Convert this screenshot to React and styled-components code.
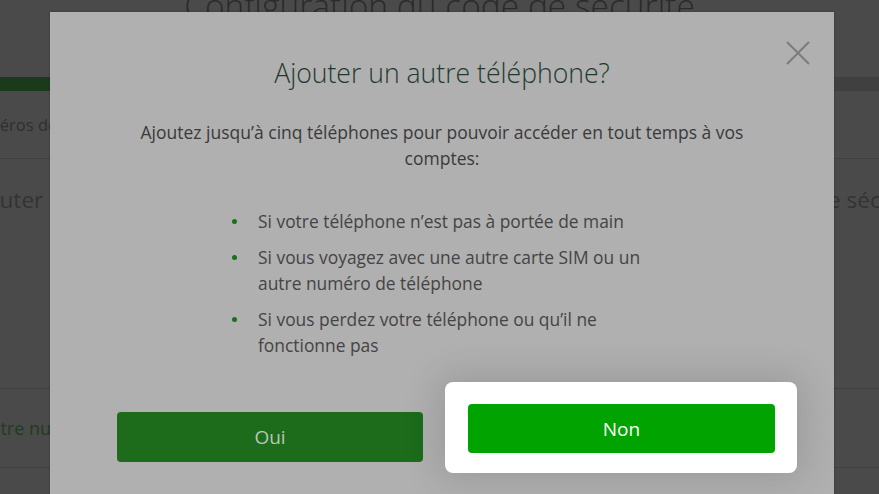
import React from 'react';
import styled, { createGlobalStyle } from 'styled-components';

const Global = createGlobalStyle`
  html, body { margin: 0; padding: 0; }
  body {
    background: #4a4a4a;
    font-family: "Open Sans", "Noto Sans", sans-serif;
    overflow: hidden;
  }
`;

const Screen = styled.div`
  position: relative;
  width: 879px;
  height: 494px;
  overflow: hidden;
  background: #4a4a4a;
`;

const Backdrop = styled.div`
  display: flex;
  flex-direction: column;
  width: 955px;
  margin-left: -38px;
`;

const PageTitle = styled.h1`
  margin: -15px 0 0;
  font-size: 33.5px;
  line-height: 40px;
  font-weight: 300;
  color: #2b2b2b;
  text-align: center;
  white-space: nowrap;
`;

const Progress = styled.div`
  margin-top: 52px;
  height: 14px;
  background: #404040;
  display: flex;
`;

const ProgressFill = styled.div`
  background: #1b3a1b;
  height: 100%;
`;

const Row = styled.div`
  display: flex;
  align-items: ${p => (p.$top ? 'flex-start' : 'center')};
  height: ${p => p.$h}px;
  padding-left: ${p => p.$indent || 0}px;
  padding-top: ${p => p.$pt || 0}px;
  box-sizing: border-box;
  border-bottom: 1px solid #3f3f3f;
  white-space: nowrap;
`;

const RowText = styled.span`
  font-size: ${p => p.$size}px;
  color: ${p => p.$color};
`;

const Modal = styled.div`
  position: absolute;
  left: 50px;
  top: 12px;
  width: 784px;
  height: 520px;
  box-sizing: border-box;
  background: #b0b0b0;
  padding: 44px 67px 0;
  display: flex;
  flex-direction: column;
  align-items: center;
  box-shadow: 0 0 2px rgba(0, 0, 0, 0.25);
`;

const Close = styled.button`
  position: absolute;
  top: 28px;
  right: 23px;
  width: 26px;
  height: 26px;
  padding: 0;
  border: 0;
  background: transparent;
  display: flex;
  align-items: center;
  justify-content: center;
`;

const Title = styled.h2`
  margin: 0;
  font-size: 26.6px;
  line-height: 34px;
  font-weight: 300;
  color: #1f3a2c;
  text-align: center;
`;

const Lead = styled.p`
  margin: 29px 0 0;
  max-width: 640px;
  font-size: 17.5px;
  line-height: 26px;
  color: #3a3a3a;
  text-align: center;
`;

const List = styled.ul`
  align-self: flex-start;
  margin: 37px 0 0 141px;
  padding: 0;
  list-style: none;
  width: 405px;
  display: flex;
  flex-direction: column;
  gap: 10px;
`;

const Item = styled.li`
  position: relative;
  font-size: 17.4px;
  line-height: 26px;
  color: #444;
  &::before {
    content: "";
    position: absolute;
    left: -26px;
    top: 11px;
    width: 5px;
    height: 5px;
    border-radius: 50%;
    background: #1a6f1a;
  }
`;

const Actions = styled.div`
  align-self: stretch;
  margin-top: 54px;
  display: grid;
  grid-template-columns: 1fr 1fr;
  gap: 38px;
`;

const Btn = styled.button`
  height: ${p => p.$h || 50}px;
  border: 0;
  border-radius: 4px;
  background: ${p => p.$bg};
  color: ${p => p.$fg};
  font-family: "Open Sans", "Noto Sans", sans-serif;
  font-size: 19px;
  font-weight: 400;
  padding: 0;
  width: 100%;
`;

const Spotlight = styled.div`
  position: absolute;
  left: 445px;
  top: 382px;
  width: 352px;
  height: 91px;
  box-sizing: border-box;
  padding: 22px 22px 20px 23px;
  background: #fff;
  border-radius: 8px;
  box-shadow: 0 0 36px 8px rgba(0, 0, 0, 0.12);
  display: flex;
`;

export default function App() {
  return (
    <>
      <Global />
      <Screen>
        <Backdrop>
          <PageTitle>Configuration du code de sécurité</PageTitle>
          <Progress>
            <ProgressFill style={{ width: '60%' }} />
          </Progress>
          <Row $h={68} $indent={-2}>
            <RowText $size={16.5} $color="#2f2f2f">Numéros de téléphone</RowText>
          </Row>
          <Row $h={230} $top $pt={25} $indent={4}>
            <RowText $size={22.55} $color="#333">
              Ajouter un autre numéro de téléphone comme méthode de réception des codes de sécurité
            </RowText>
          </Row>
          <Row $h={79} $indent={16}>
            <RowText $size={18} $color="#1e3d1e">Autre numéro</RowText>
          </Row>
        </Backdrop>

        <Modal role="dialog">
          <Close aria-label="Fermer">
            <svg width="24" height="24" viewBox="0 0 24 24">
              <path d="M1 1 L23 23 M23 1 L1 23" stroke="#7c7c7c" strokeWidth="2" fill="none" />
            </svg>
          </Close>
          <Title>Ajouter un autre téléphone?</Title>
          <Lead>
            Ajoutez jusqu’à cinq téléphones pour pouvoir accéder en tout temps à vos comptes:
          </Lead>
          <List>
            <Item>Si votre téléphone n’est pas à portée de main</Item>
            <Item>Si vous voyagez avec une autre carte SIM ou un autre numéro de téléphone</Item>
            <Item>Si vous perdez votre téléphone ou qu’il ne fonctionne pas</Item>
          </List>
          <Actions>
            <Btn $bg="#1c6c1c" $fg="#b6c6b6">Oui</Btn>
            <Btn $bg="#007000" $fg="#b0c0b0">Non</Btn>
          </Actions>
        </Modal>

        <Spotlight>
          <Btn $bg="#00a300" $fg="#ffffff" $h={49}>Non</Btn>
        </Spotlight>
      </Screen>
    </>
  );
}
